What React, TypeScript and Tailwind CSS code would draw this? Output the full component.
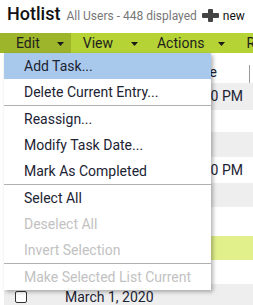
import React from "react";

const items: ({ label: string; disabled?: boolean; active?: boolean } | "sep")[] = [
  { label: "Add Task...", active: true },
  { label: "Delete Current Entry..." },
  "sep",
  { label: "Reassign..." },
  { label: "Modify Task Date..." },
  { label: "Mark As Completed" },
  "sep",
  { label: "Select All" },
  { label: "Deselect All", disabled: true },
  { label: "Invert Selection", disabled: true },
  "sep",
  { label: "Make Selected List Current", disabled: true },
];

// background rows: height, bg, text at the end of the time column
const rows = [
  { h: "h-[27px]", bg: "bg-[#eeeeee]", time: "3:00 PM" },
  { h: "h-[22px]", bg: "bg-white", time: "" },
  { h: "h-[25px]", bg: "bg-[#eeeeee]", time: "" },
  { h: "h-[26px]", bg: "bg-white", time: "2:00 PM" },
  { h: "h-[24px]", bg: "bg-[#eeeeee]", time: "" },
  { h: "h-[28px]", bg: "bg-white", time: "" },
  { h: "h-[24px]", bg: "bg-[#e1f08b]", time: "" },
  { h: "h-[24px]", bg: "bg-white", time: "" },
];

function Caret() {
  return (
    <svg width="7" height="4" viewBox="0 0 7 4" className="mt-[2px]">
      <polygon points="0,0 7,0 3.5,4" fill="#1a1a1a" />
    </svg>
  );
}

export default function App() {
  return (
    <div className="relative w-[253px] h-[305px] overflow-hidden bg-white font-['Roboto',sans-serif]">
      {/* title */}
      <div className="flex items-baseline h-[33px] pt-[3px] pl-[7px]">
        <span className="text-[18px] leading-[22px] font-medium text-[#111]">Hotlist</span>
        <span className="ml-[6px] text-[12px] text-[#777]">All Users - 448 displayed</span>
        <svg width="17" height="13" viewBox="0 0 17 13" className="ml-[5px] self-start mt-[6px]">
          <rect x="0" y="4" width="17" height="5" rx="1" fill="#444" />
          <rect x="6" y="0" width="5" height="13" rx="1" fill="#444" />
        </svg>
        <span className="ml-[4px] text-[12px] text-[#111]">new</span>
      </div>

      {/* menu bar */}
      <div className="flex h-[20px] bg-[#b5d334] text-[14px] text-[#1e1e1e] leading-[20px] whitespace-nowrap">
        <div className="flex items-center bg-[#9db52a] pl-[16px] pr-[7px]">
          <span>Edit</span>
          <span className="ml-[17px] flex"><Caret /></span>
        </div>
        <div className="flex items-center pl-[12px] pr-[7px]">
          <span>View</span>
          <span className="ml-[18px] flex"><Caret /></span>
        </div>
        <div className="flex items-center pl-[12px] pr-[7px]">
          <span>Actions</span>
          <span className="ml-[14px] flex"><Caret /></span>
        </div>
        <div className="flex items-center pl-[14px]">
          <span>Reports</span>
        </div>
      </div>

      {/* list behind the menu */}
      <div className="ml-[4px] text-[14px] text-[#1c2333]">
        <div className="flex h-[30px] bg-white">
          <div className="w-[61px]" />
          <div className="w-[152px] flex items-center justify-end pt-[9px]">Date</div>
          <div className="w-[33px] flex items-end">
            <div className="ml-auto w-px h-[18px] bg-[#999]" />
          </div>
        </div>
        {rows.map((r, i) => (
          <div key={i} className={`flex items-center ${r.h} ${r.bg} ${i === 6 ? "mt-px" : ""}`}>
            <div className="w-[61px]" />
            <div className="w-[178px] text-right whitespace-nowrap overflow-hidden">{r.time}</div>
          </div>
        ))}
        <div className="flex items-center h-[26px] bg-[#eeeeee]">
          <div className="w-[61px] flex pl-[11px]">
            <div className="w-[12px] h-[12px] rounded-[2px] border border-[#333] bg-white" />
          </div>
          <div>March 1, 2020</div>
        </div>
      </div>

      {/* edit dropdown */}
      <div className="absolute left-[4px] top-[53px] w-[207px] bg-white shadow-[2px_2px_4px_rgba(0,0,0,0.3)] text-[14px]">
        {items.map((it, i) =>
          it === "sep" ? (
            <div key={i} className="h-px bg-[#b0b0b0]" />
          ) : (
            <div
              key={i}
              className={`flex items-center h-[26px] pl-[20px] ${it.active ? "bg-[#a8c9eb]" : ""} ${
                it.disabled ? "text-[#c2c2c2]" : "text-[#1c2333]"
              }`}
            >
              {it.label}
            </div>
          )
        )}
      </div>
    </div>
  );
}
